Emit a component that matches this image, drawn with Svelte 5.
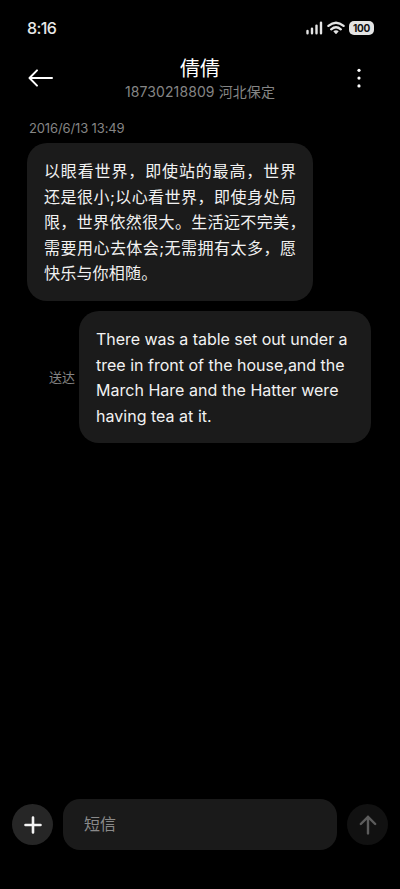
<script lang="ts">
  type Line = { text: string; tracking: number };

  const contact = { name: '倩倩', number: '18730218809', region: '河北保定' };

  const received: Line[] = [
    { text: '以眼看世界，即使站的最高，世界', tracking: 0.86 },
    { text: '还是很小;以心看世界，即使身处局', tracking: 0.47 },
    { text: '限，世界依然很大。生活远不完美，', tracking: 0.36 },
    { text: '需要用心去体会;无需拥有太多，愿', tracking: 0.47 },
    { text: '快乐与你相随。', tracking: 0.2 }
  ];

  const sent: Line[] = [
    { text: 'There was a table set out under a', tracking: -0.04 },
    { text: 'tree in front of the house,and the', tracking: 0 },
    { text: 'March Hare and the Hatter were', tracking: 0.02 },
    { text: 'having tea at it.', tracking: 0.02 }
  ];
</script>

<main class="screen" lang="zh-CN">
  <div class="status-bar">
    <span class="clock">8:16</span>
    <div class="indicators">
      <svg class="signal" width="17" height="14" viewBox="0 0 17 14">
        <path d="M1.5 10V12.2M6 7.6V12.2M10.5 4.6V12.2M15 1.6V12.2" />
      </svg>
      <svg class="wifi" width="18" height="14" viewBox="0 0 18 14">
        <path d="M1.4 4.9Q9 -1.5 16.6 4.9M4.2 8.3Q9 4.3 13.8 8.3" />
        <path class="dot" d="M6.3 10.3Q9 8.4 11.7 10.3L9.5 12.8Q9 13.3 8.5 12.8Z" />
      </svg>
      <span class="battery">100</span>
    </div>
  </div>

  <header class="top-bar">
    <button type="button" aria-label="返回">
      <svg width="26" height="20" viewBox="0 0 26 20">
        <path d="M24 10H1.8M9 2.4L1.5 10L9 17.6" />
      </svg>
    </button>
    <div class="contact">
      <h1>{contact.name}</h1>
      <p>{contact.number} {contact.region}</p>
    </div>
    <button type="button" class="more" aria-label="更多">
      <svg width="6" height="20" viewBox="0 0 6 20">
        <circle cx="3" cy="2.3" r="1.6" />
        <circle cx="3" cy="10.1" r="1.6" />
        <circle cx="3" cy="17.9" r="1.6" />
      </svg>
    </button>
  </header>

  <section class="thread">
    <time>2016/6/13 13:49</time>
    <div class="bubble received">
      {#each received as line}
        <span style:letter-spacing="{line.tracking}px">{line.text}</span>
      {/each}
    </div>
    <div class="sent-row">
      <small>送达</small>
      <div class="bubble sent">
        {#each sent as line}
          <span style:letter-spacing="{line.tracking}px">{line.text}</span>
        {/each}
      </div>
    </div>
  </section>

  <footer class="composer">
    <button type="button" class="round add" aria-label="添加">
      <svg width="20" height="20" viewBox="0 0 20 20">
        <path d="M10 2.5V17.5M2.5 10H17.5" />
      </svg>
    </button>
    <div class="field">短信</div>
    <button type="button" class="round send" aria-label="发送">
      <svg width="20" height="22" viewBox="0 0 20 22">
        <path d="M10 19.4V2.8M2.8 10L10 2.8L17.2 10" />
      </svg>
    </button>
  </footer>
</main>

<style>
  :global(body) {
    background: #000;
  }

  .screen {
    width: 400px;
    height: 889px;
    box-sizing: border-box;
    display: flex;
    flex-direction: column;
    overflow: hidden;
    background: #000;
    color: #f2f2f2;
    font-family: Inter, 'Noto Sans CJK SC', sans-serif;
  }

  svg {
    display: block;
    fill: none;
    stroke: currentColor;
    stroke-linecap: round;
    stroke-linejoin: round;
  }

  button {
    border: 0;
    padding: 0;
    background: transparent;
    color: inherit;
    cursor: pointer;
  }

  .status-bar {
    height: 56px;
    padding: 0 26px 0 27px;
    display: flex;
    align-items: center;
    justify-content: space-between;
  }

  .clock {
    font-size: 16px;
    font-weight: 500;
    letter-spacing: -0.6px;
    color: #e8e8e8;
  }

  .indicators {
    display: flex;
    align-items: center;
    gap: 4px;
    color: #e4e4e4;
  }

  .signal {
    stroke-width: 2.4;
  }

  .wifi {
    stroke-width: 2.3;
  }

  .wifi .dot {
    fill: currentColor;
    stroke: none;
  }

  .battery {
    width: 25px;
    height: 14px;
    border-radius: 5px;
    background: #e4e4e4;
    color: #111;
    font-size: 10px;
    font-weight: 700;
    line-height: 14px;
    letter-spacing: -0.2px;
    text-align: center;
  }

  .top-bar {
    height: 44px;
    padding: 0 38px 0 28px;
    display: grid;
    grid-template-columns: 26px 1fr 6px;
    align-items: center;
    color: #fff;
  }

  .top-bar svg {
    margin-bottom: 2px;
    stroke-width: 2;
  }

  .top-bar .more svg {
    fill: currentColor;
    stroke: none;
  }

  .contact {
    padding: 0 10px 1px 0;
    text-align: center;
  }

  h1 {
    margin: 0;
    font-size: 20px;
    font-weight: 400;
    line-height: 26px;
  }

  p {
    margin: 0;
    font-size: 14px;
    line-height: 19px;
    letter-spacing: 0.1px;
    color: #858585;
  }

  .thread {
    flex: 1;
    padding: 19px 29px 0 27px;
  }

  time {
    display: block;
    padding-left: 2px;
    height: 24px;
    font-size: 13px;
    line-height: 19px;
    letter-spacing: -0.13px;
    color: #858585;
  }

  .bubble {
    box-sizing: border-box;
    border-radius: 20px;
    background: #1b1b1b;
    font-size: 16px;
    line-height: 25.6px;
    white-space: nowrap;
  }

  .bubble span {
    display: block;
  }

  .received {
    width: 286px;
    height: 158px;
    padding: 16px 16px 0 17px;
  }

  .sent-row {
    margin-top: 10px;
    display: flex;
    align-items: center;
    justify-content: flex-end;
    gap: 4px;
  }

  .sent-row small {
    padding-bottom: 2px;
    font-size: 13px;
    color: #858585;
  }

  .sent {
    width: 292px;
    height: 132px;
    padding: 16px 16px 0 17px;
  }

  .composer {
    padding: 0 12px 39px;
    display: flex;
    align-items: center;
    justify-content: space-between;
  }

  .round {
    width: 41px;
    height: 41px;
    border-radius: 50%;
    display: grid;
    place-items: center;
  }

  .add {
    background: #262626;
    color: #f4f4f4;
  }

  .add svg {
    stroke-width: 2.6;
  }

  .send {
    background: #111;
    color: #5c5c5c;
  }

  .send svg {
    stroke-width: 2.4;
  }

  .field {
    width: 274px;
    height: 51px;
    box-sizing: border-box;
    padding-left: 21px;
    border-radius: 17px;
    background: #1a1a1a;
    color: #8a8a8a;
    font-size: 16px;
    line-height: 51px;
  }
</style>
